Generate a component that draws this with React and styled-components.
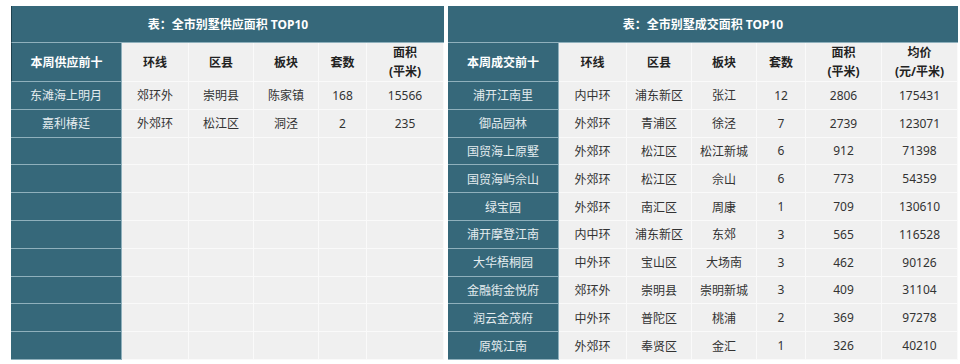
import styled, { createGlobalStyle } from "styled-components";

const TEAL = "#36687a";
const TEAL_LINE = "#8fb0bc";
const GRAY = "#f0f0f0";

const GlobalStyle = createGlobalStyle`
  body {
    margin: 0;
    background: #ffffff;
    font-family: "Noto Sans", "Noto Sans CJK SC", sans-serif;
  }
`;

const supply = {
  title: "表：全市别墅供应面积 TOP10",
  head: ["本周供应前十", "环线", "区县", "板块", "套数", ["面积", "(平米)"]],
  cols: "111px 67px 65px 65px 48px 77px",
  width: 433,
  rows: [
    ["东滩海上明月", "郊环外", "崇明县", "陈家镇", "168", "15566"],
    ["嘉利椿廷", "外郊环", "松江区", "洞泾", "2", "235"],
    ...Array.from({ length: 8 }, () => ["", "", "", "", "", ""]),
  ],
};

const deals = {
  title: "表：全市别墅成交面积 TOP10",
  head: ["本周成交前十", "环线", "区县", "板块", "套数", ["面积", "(平米)"], ["均价", "(元/平米)"]],
  cols: "111px 68px 65px 65px 49px 76px 76px",
  width: 510,
  rows: [
    ["浦开江南里", "内中环", "浦东新区", "张江", "12", "2806", "175431"],
    ["御品园林", "外郊环", "青浦区", "徐泾", "7", "2739", "123071"],
    ["国贸海上原墅", "外郊环", "松江区", "松江新城", "6", "912", "71398"],
    ["国贸海屿佘山", "外郊环", "松江区", "佘山", "6", "773", "54359"],
    ["绿宝园", "外郊环", "南汇区", "周康", "1", "709", "130610"],
    ["浦开摩登江南", "内中环", "浦东新区", "东郊", "3", "565", "116528"],
    ["大华梧桐园", "中外环", "宝山区", "大场南", "3", "462", "90126"],
    ["金融街金悦府", "郊环外", "崇明县", "崇明新城", "3", "409", "31104"],
    ["润云金茂府", "中外环", "普陀区", "桃浦", "2", "369", "97278"],
    ["原筑江南", "外郊环", "奉贤区", "金汇", "1", "326", "40210"],
  ],
};

function Table({ data, edge }) {
  return (
    <Grid $cols={data.cols} $width={data.width}>
      <Title $edge={edge}>{data.title}</Title>
      {data.head.map((h, i) =>
        i === 0 ? (
          <NameHead key={i} $edge={edge}>{h}</NameHead>
        ) : (
          <HeadCell key={i}>
            {Array.isArray(h) ? (
              <>
                <span>{h[0]}</span>
                <span>{h[1]}</span>
              </>
            ) : (
              h
            )}
          </HeadCell>
        )
      )}
      {data.rows.map((r, ri) =>
        r.map((c, ci) =>
          ci === 0 ? (
            <NameCell key={`${ri}-${ci}`}>{c}</NameCell>
          ) : (
            <Cell key={`${ri}-${ci}`}>{c}</Cell>
          )
        )
      )}
    </Grid>
  );
}

export default function App() {
  return (
    <>
      <GlobalStyle />
      <Page>
        <Table data={supply} edge />
        <Table data={deals} />
      </Page>
    </>
  );
}

const Page = styled.div`
  display: flex;
  gap: 4px;
  padding: 6px 0 0 11px;
  width: 960px;
  height: 364px;
  box-sizing: border-box;
`;

const Grid = styled.div`
  display: grid;
  width: ${(p) => p.$width}px;
  grid-template-columns: ${(p) => p.$cols};
  grid-template-rows: 37px 39px repeat(10, 1fr);
  height: 354px;
  font-size: 12px;
`;

const Title = styled.div`
  grid-column: 1 / -1;
  background: ${TEAL};
  color: #ffffff;
  font-weight: 700;
  display: flex;
  align-items: center;
  justify-content: center;
  border-bottom: 1px solid ${TEAL_LINE};
  border-left: ${(p) => (p.$edge ? "1px solid #1e4250" : "none")};
`;

const NameCell = styled.div`
  background: ${TEAL};
  color: #e4ecef;
  display: flex;
  align-items: center;
  justify-content: center;
  border-bottom: 1px solid ${TEAL_LINE};
  border-right: 1px solid ${TEAL_LINE};
  box-sizing: border-box;
`;

const NameHead = styled(NameCell)`
  color: #ffffff;
  font-weight: 700;
  border-left: ${(p) => (p.$edge ? "1px solid #1e4250" : "none")};
`;

const Cell = styled.div`
  background: ${GRAY};
  color: #333333;
  display: flex;
  align-items: center;
  justify-content: center;
  border-bottom: 1px solid #fafafa;
  border-right: 1px solid #fafafa;
  box-sizing: border-box;
`;

const HeadCell = styled(Cell)`
  flex-direction: column;
  font-weight: 700;
  color: #222222;
  line-height: 19px;
`;
